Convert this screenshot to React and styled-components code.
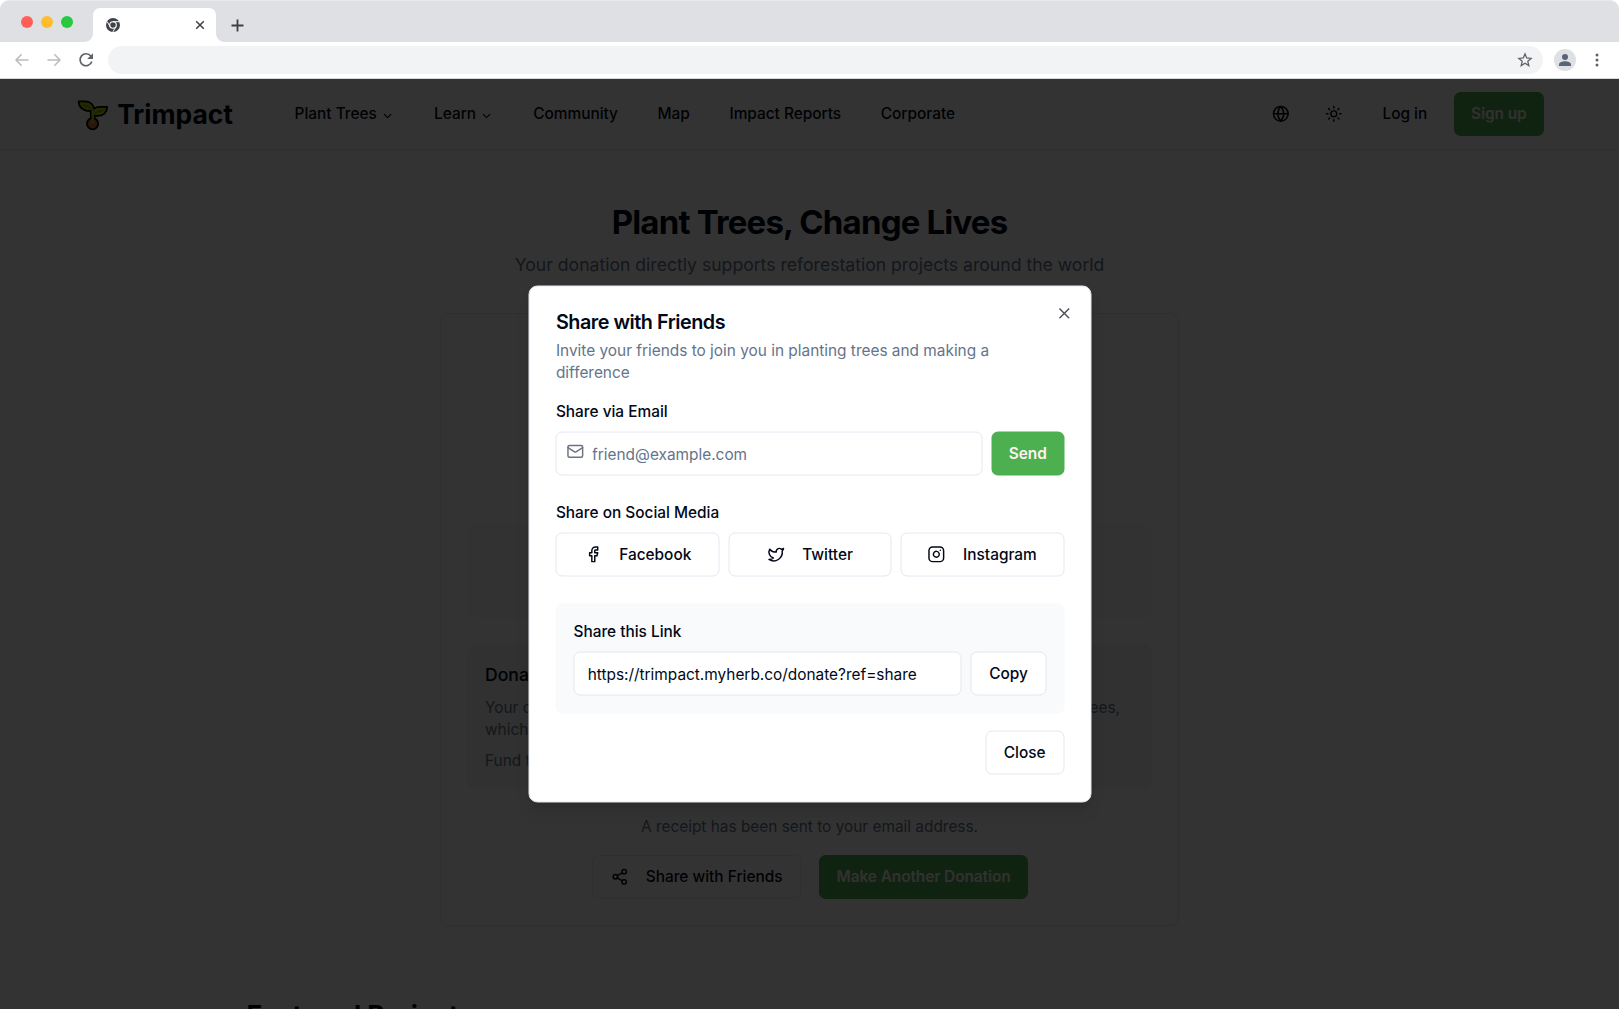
import React from "react";
import styled, { createGlobalStyle, css } from "styled-components";
import {
  ChevronDown,
  Facebook,
  Globe,
  Instagram,
  Mail,
  Share2,
  Sun,
  Twitter,
  X,
} from "lucide-react";

const GlobalStyle = createGlobalStyle`
  *, *::before, *::after { box-sizing: border-box; }
  html, body { margin: 0; padding: 0; overflow: hidden; background: #fff; }
  body {
    font-family: Inter, "Liberation Sans", sans-serif;
    font-size: 15.4px;
    line-height: 22px;
    color: #020817;
  }
  h1, h2, h3, p { margin: 0; }
  button, input { font: inherit; }
`;

const Window = styled.div`
  display: flex;
  flex-direction: column;
  width: 1619px;
  height: 1009px;
  overflow: hidden;
  background: #fff;
`;

/* ---------- browser chrome ---------- */

const TabStrip = styled.div`
  display: flex;
  align-items: flex-end;
  flex: none;
  height: 42px;
  padding-left: 21px;
  background: #dee0e4;
  border-top: 1px solid #e9eaed;
  border-radius: 9px 9px 0 0;
`;

const Lights = styled.div`
  display: flex;
  gap: 8px;
  height: 41px;
  padding-top: 14.5px;
  margin-right: 20px;
`;

const Light = styled.span`
  width: 12px;
  height: 12px;
  border-radius: 50%;
  background: ${(p) => p.$color};
`;

const Tab = styled.div`
  position: relative;
  display: flex;
  align-items: center;
  justify-content: space-between;
  width: 123px;
  height: 34px;
  padding: 0 11px 0 13px;
  background: #fff;
  border-radius: 7px 7px 0 0;

  &::before,
  &::after {
    content: "";
    position: absolute;
    bottom: 0;
    width: 8px;
    height: 8px;
  }
  &::before {
    left: -8px;
    background: radial-gradient(circle at 0 0, transparent 7.5px, #fff 8px);
  }
  &::after {
    right: -8px;
    background: radial-gradient(circle at 100% 0, transparent 7.5px, #fff 8px);
  }
`;

const NewTab = styled.div`
  display: flex;
  align-items: center;
  height: 34px;
  margin-left: 15px;
`;

const Toolbar = styled.div`
  display: flex;
  align-items: center;
  flex: none;
  height: 37px;
  padding: 0 14px 0 14px;
  background: #fff;
  border-bottom: 1px solid #d5d7db;
`;

const NavIcons = styled.div`
  display: flex;
  gap: 16px;
  margin-right: 14px;
`;

const AddressBar = styled.div`
  display: flex;
  align-items: center;
  justify-content: flex-end;
  flex: 1;
  height: 28px;
  padding-right: 10px;
  margin-right: 11px;
  border-radius: 14px;
  background: #f1f3f4;
`;

const Avatar = styled.div`
  display: flex;
  align-items: center;
  justify-content: center;
  width: 22px;
  height: 22px;
  margin-right: 13px;
  border-radius: 50%;
  background: #dee0e4;
`;

/* ---------- page ---------- */

const Page = styled.div`
  position: relative;
  flex: 1;
  min-height: 0;
  overflow: hidden;
`;

const Header = styled.header`
  display: flex;
  align-items: center;
  height: 71px;
  padding: 0 75px 0 76px;
  border-bottom: 1px solid #e2e8f0;
`;

const Brand = styled.div`
  display: flex;
  align-items: center;
  gap: 8.2px;
  width: 201px;
  padding-top: 1px;
  font-size: 26.4px;
  font-weight: 700;
  line-height: 35px;
`;

const Nav = styled.nav`
  display: flex;
  flex: 1;
  gap: 4.4px;
`;

const NavItem = styled.span`
  display: flex;
  align-items: center;
  gap: 4.4px;
  padding: 0 17.6px;
  font-weight: 500;
  transform: translateY(0.4px);

  svg {
    margin-top: 3px;
  }
`;

const Actions = styled.div`
  display: flex;
  gap: 8.8px;
`;

const variants = {
  primary: css`
    background: #4caf50;
    color: #fff1f2;
    font-weight: 600;
    padding: 0 17.4px;
    letter-spacing: -0.06px;
  `,
  outline: css`
    background: #fff;
    border: 1px solid #e2e8f0;
  `,
  ghost: css`
    background: transparent;
  `,
};

const Button = styled.button`
  display: inline-flex;
  align-items: center;
  justify-content: center;
  gap: 17.6px;
  flex: none;
  height: 44px;
  padding: 0 17.6px;
  border: 0;
  border-radius: 6.6px;
  color: #020817;
  font-weight: 500;
  white-space: nowrap;
  ${(p) => variants[p.$variant]}
`;

const IconButton = styled(Button)`
  width: 44px;
  padding: 0;
`;

const Hero = styled.section`
  display: flex;
  flex-direction: column;
  align-items: center;
  padding-top: 53px;
`;

const HeroTitle = styled.h1`
  font-size: 33px;
  font-weight: 700;
  line-height: 39.6px;
  letter-spacing: -0.025em;
`;

const HeroText = styled.p`
  margin-top: 8.8px;
  font-size: 17.6px;
  line-height: 28px;
  color: #64748b;
`;

const Card = styled.section`
  display: flex;
  flex-direction: column;
  justify-content: flex-end;
  width: 739px;
  height: 613.5px;
  margin: 33.6px auto 0;
  padding: 26.4px 26px;
  border: 1px solid #e2e8f0;
  border-radius: 8.8px;
  box-shadow: 0 1px 2px rgba(0, 0, 0, 0.05);
`;

const Summary = styled.div`
  height: 94px;
  margin-bottom: 26px;
  border-radius: 8.8px;
  background: #f8fafc;
`;

const Impact = styled.div`
  height: 145.5px;
  padding: 18.4px 32px 0 18px;
  border-radius: 8.8px;
  background: #eef6f0;
  color: #64748b;
`;

const ImpactTitle = styled.h3`
  margin-bottom: 8.8px;
  font-size: 17.6px;
  font-weight: 500;
  line-height: 26.4px;
  color: #020817;
`;

const ImpactLine = styled.p`
  display: flex;
  justify-content: space-between;
  margin-top: ${(p) => p.$top || 0};
`;

const Receipt = styled.p`
  margin: 26.4px 0 17.6px;
  text-align: center;
  color: #64748b;
`;

const CardActions = styled.div`
  display: flex;
  justify-content: center;
  gap: 18px;
  padding-left: 1px;
`;

const SectionTitle = styled.h2`
  margin: 72px 0 0 246.5px;
  font-size: 26.4px;
  font-weight: 700;
  line-height: 35.2px;
`;

/* ---------- dialog ---------- */

const Overlay = styled.div`
  position: absolute;
  inset: 0;
  display: flex;
  justify-content: center;
  align-items: flex-start;
  padding-top: 206px;
  background: rgba(0, 0, 0, 0.8);
`;

const Dialog = styled.div`
  position: relative;
  display: flex;
  flex-direction: column;
  width: 563px;
  padding: 26.4px;
  border: 1px solid #e2e8f0;
  border-radius: 8.8px;
  background: #fff;
  box-shadow: 0 11px 16px -3px rgba(0, 0, 0, 0.1), 0 4px 7px -4px rgba(0, 0, 0, 0.1);
  transform: translate(0.5px, 0.5px);
`;

const CloseMark = styled.span`
  position: absolute;
  top: 17.6px;
  right: 17.6px;
  display: flex;
  opacity: 0.7;
`;

const DialogTitle = styled.h2`
  font-size: 19.8px;
  font-weight: 600;
  line-height: 19.8px;
  letter-spacing: -0.024em;
`;

const DialogText = styled.p`
  margin: 7.2px 0 16.8px;
  color: #64748b;
`;

const Group = styled.div`
  display: flex;
  flex-direction: column;
  gap: 8.8px;
  margin-bottom: 26.4px;
`;

const LinkPanel = styled(Group)`
  margin-bottom: 17.6px;
  padding: 17.6px;
  border-radius: 6.6px;
  background: #f8fafc;
`;

const Label = styled.span`
  font-weight: 500;
`;

const Row = styled.div`
  display: flex;
  gap: 8.8px;
`;

const SocialGrid = styled.div`
  display: grid;
  grid-template-columns: repeat(3, 1fr);
  gap: 8.8px;
`;

const Field = styled.div`
  display: flex;
  flex: 1;
  gap: 8px;
  min-width: 0;
  height: 44px;
  padding: 0 ${(p) => (p.$icon ? "9.6px" : "13.2px")};
  border: 1px solid #e2e8f0;
  border-radius: 6.6px;
  background: #fff;

  svg {
    flex: none;
    margin-top: 9.6px;
    color: #6b7280;
  }
`;

const Input = styled.input`
  flex: 1;
  min-width: 0;
  height: 43px;
  padding: 1px 0 0;
  border: 0;
  outline: 0;
  background: transparent;
  color: #020817;

  &::placeholder {
    color: #64748b;
    opacity: 1;
  }
`;

const Footer = styled.div`
  display: flex;
  justify-content: flex-end;
  padding-bottom: 0.6px;
`;

const ICON = 17.6;

const SproutLogo = () => (
  <svg width="33" height="33" viewBox="0 0 33 33">
    <path
      d="M2.600 3.400H9C14 3.400 17.300 6.500 18 10.600 19.500 9.300 21 8.900 24 8.900H31.200C31 14.300 27.500 17.900 22 17.900H18.600V25H14.800V13.200C8 13.400 2.800 9.800 2.600 3.400Z"
      fill="#b0d210"
      stroke="#000"
      strokeWidth="1.800"
      strokeLinejoin="round"
    />
    <circle cx="16.600" cy="25.700" r="5.600" fill="#d8703a" stroke="#000" strokeWidth="1.800" />
    <path d="M15.600 13H17.800V25.500H15.600Z" fill="#b0d210" />
    <path d="M7 7Q13.500 7.500 16.300 12.500M19.500 14.500Q23 13 26.500 12.500" fill="none" stroke="#7a9a10" strokeWidth="1.300" />
  </svg>
);

const ChromeMark = () => (
  <svg width="14" height="14" viewBox="0 0 14 14">
    <circle cx="7" cy="7" r="7" fill="#3f4247" />
    <circle cx="7" cy="7" r="3.300" fill="none" stroke="#fff" strokeWidth="1.100" />
    <path d="M7 3.700H13M4.100 8.700 1.200 3.600M9.800 8.700 6.900 13.800" stroke="#fff" strokeWidth="1" />
  </svg>
);

const PlusMark = () => (
  <svg width="13" height="13" viewBox="0 0 13 13">
    <path d="M6.500 .5V12.500M.5 6.500H12.500" stroke="#3c4043" strokeWidth="1.800" />
  </svg>
);

const CrossMark = () => (
  <svg width="10" height="10" viewBox="0 0 10 10">
    <path d="M1.200 1.200 8.800 8.800M8.800 1.200 1.200 8.800" stroke="#3c4043" strokeWidth="1.500" />
  </svg>
);

const Arrow = ({ flip }) => (
  <svg width="16" height="16" viewBox="0 0 16 16">
    <path
      d={flip ? "M1.500 8H14M8.300 2.200 14 8 8.300 13.800" : "M14.500 8H2M7.700 2.200 2 8 7.700 13.800"}
      fill="none"
      stroke="#babcbe"
      strokeWidth="1.500"
    />
  </svg>
);

const Reload = () => (
  <svg width="16" height="16" viewBox="0 0 16 16">
    <path d="M12.800 4A6 6 0 1 0 13.800 9.600" fill="none" stroke="#5f6368" strokeWidth="1.700" />
    <path d="M15 1.200V7H9.200Z" fill="#5f6368" />
  </svg>
);

const Star = () => (
  <svg width="16" height="16" viewBox="0 0 16 16">
    <path
      d="M8 1.900 9.700 6 14.100 6.400 10.800 9.300 11.800 13.600 8 11.300 4.200 13.600 5.200 9.300 1.900 6.400 6.300 6Z"
      fill="none"
      stroke="#5f6368"
      strokeWidth="1.300"
    />
  </svg>
);

const Person = () => (
  <svg width="12" height="12" viewBox="0 0 12 12">
    <circle cx="6" cy="3" r="3" fill="#5a6478" />
    <path d="M0 12V10.500C0 8.500 3.500 7.300 6 7.300S12 8.500 12 10.500V12Z" fill="#5a6478" />
  </svg>
);

const Dots = () => (
  <svg width="16" height="16" viewBox="0 0 16 16">
    <circle cx="8" cy="3" r="1.500" fill="#5f6368" />
    <circle cx="8" cy="8" r="1.500" fill="#5f6368" />
    <circle cx="8" cy="13" r="1.500" fill="#5f6368" />
  </svg>
);

const navItems = [
  { label: "Plant Trees", menu: true },
  { label: "Learn", menu: true },
  { label: "Community" },
  { label: "Map" },
  { label: "Impact Reports" },
  { label: "Corporate" },
];

const networks = [
  { label: "Facebook", Icon: Facebook },
  { label: "Twitter", Icon: Twitter },
  { label: "Instagram", Icon: Instagram },
];

const BrowserChrome = () => (
  <>
    <TabStrip>
      <Lights>
        <Light $color="#ff5f57" />
        <Light $color="#febc2e" />
        <Light $color="#28c840" />
      </Lights>
      <Tab>
        <ChromeMark />
        <CrossMark />
      </Tab>
      <NewTab>
        <PlusMark />
      </NewTab>
    </TabStrip>
    <Toolbar>
      <NavIcons>
        <Arrow />
        <Arrow flip />
        <Reload />
      </NavIcons>
      <AddressBar>
        <Star />
      </AddressBar>
      <Avatar>
        <Person />
      </Avatar>
      <Dots />
    </Toolbar>
  </>
);

const ShareDialog = () => (
  <Dialog role="dialog">
    <CloseMark>
      <X size={ICON} />
    </CloseMark>
    <DialogTitle>Share with Friends</DialogTitle>
    <DialogText>Invite your friends to join you in planting trees and making a difference</DialogText>
    <Group>
      <Label>Share via Email</Label>
      <Row>
        <Field $icon>
          <Mail size={ICON} />
          <Input placeholder="friend@example.com" />
        </Field>
        <Button $variant="primary">Send</Button>
      </Row>
    </Group>
    <Group>
      <Label>Share on Social Media</Label>
      <SocialGrid>
        {networks.map(({ label, Icon }) => (
          <Button key={label} $variant="outline">
            <Icon size={ICON} />
            {label}
          </Button>
        ))}
      </SocialGrid>
    </Group>
    <LinkPanel>
      <Label>Share this Link</Label>
      <Row>
        <Field>
          <Input readOnly value="https://trimpact.myherb.co/donate?ref=share" />
        </Field>
        <Button $variant="outline">Copy</Button>
      </Row>
    </LinkPanel>
    <Footer>
      <Button $variant="outline">Close</Button>
    </Footer>
  </Dialog>
);

export default function App() {
  return (
    <Window>
      <GlobalStyle />
      <BrowserChrome />
      <Page>
        <Header>
          <Brand>
            <SproutLogo />
            Trimpact
          </Brand>
          <Nav>
            {navItems.map((item) => (
              <NavItem key={item.label}>
                {item.label}
                {item.menu && <ChevronDown size={13.2} />}
              </NavItem>
            ))}
          </Nav>
          <Actions>
            <IconButton $variant="ghost">
              <Globe size={ICON} />
            </IconButton>
            <IconButton $variant="ghost">
              <Sun size={ICON} />
            </IconButton>
            <Button $variant="ghost">Log in</Button>
            <Button $variant="primary">Sign up</Button>
          </Actions>
        </Header>
        <Hero>
          <HeroTitle>Plant Trees, Change Lives</HeroTitle>
          <HeroText>Your donation directly supports reforestation projects around the world</HeroText>
        </Hero>
        <Card>
          <Summary />
          <Impact>
            <ImpactTitle>Dona</ImpactTitle>
            <ImpactLine>
              <span>Your c</span>
              <span>ees,</span>
            </ImpactLine>
            <ImpactLine>which</ImpactLine>
            <ImpactLine $top="8.8px">Fund t</ImpactLine>
          </Impact>
          <Receipt>A receipt has been sent to your email address.</Receipt>
          <CardActions>
            <Button $variant="outline">
              <Share2 size={ICON} />
              Share with Friends
            </Button>
            <Button $variant="primary">Make Another Donation</Button>
          </CardActions>
        </Card>
        <SectionTitle>Featured Projects</SectionTitle>
        <Overlay>
          <ShareDialog />
        </Overlay>
      </Page>
    </Window>
  );
}
